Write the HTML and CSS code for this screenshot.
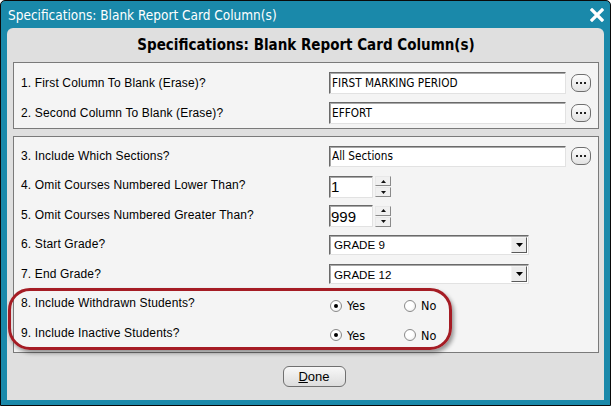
FILE: index.html
```html
<!DOCTYPE html>
<html>
<head>
<meta charset="utf-8">
<link rel="stylesheet" href="styles.css">
</head>
<body>
<div class="window">
  <div class="titlebar">
    <span class="title">Specifications: Blank Report Card Column(s)</span>
    <svg class="close" width="14" height="14" viewBox="0 0 14 14"><path d="M2 2 L12 12 M12 2 L2 12" stroke="#fff" stroke-width="3.2" stroke-linecap="square"/></svg>
  </div>
  <div class="panel">
    <div class="header">Specifications: Blank Report Card Column(s)</div>
    <div class="group g1">
      <div class="row r30">
        <span class="label">1. First Column To Blank (Erase)?</span>
        <div class="ctl"><div class="field wide">FIRST MARKING PERIOD</div><div class="ell"><svg width="10" height="2" viewBox="0 0 10 2"><rect x="0" y="0" width="2" height="2" fill="#222"/><rect x="4" y="0" width="2" height="2" fill="#222"/><rect x="8" y="0" width="2" height="2" fill="#222"/></svg></div></div>
      </div>
      <div class="row r30">
        <span class="label">2. Second Column To Blank (Erase)?</span>
        <div class="ctl"><div class="field wide">EFFORT</div><div class="ell"><svg width="10" height="2" viewBox="0 0 10 2"><rect x="0" y="0" width="2" height="2" fill="#222"/><rect x="4" y="0" width="2" height="2" fill="#222"/><rect x="8" y="0" width="2" height="2" fill="#222"/></svg></div></div>
      </div>
    </div>
    <div class="group g2">
      <div class="row r30">
        <span class="label">3. Include Which Sections?</span>
        <div class="ctl"><div class="field wide sec">All Sections</div><div class="ell"><svg width="10" height="2" viewBox="0 0 10 2"><rect x="0" y="0" width="2" height="2" fill="#222"/><rect x="4" y="0" width="2" height="2" fill="#222"/><rect x="8" y="0" width="2" height="2" fill="#222"/></svg></div></div>
      </div>
      <div class="row r29">
        <span class="label">4. Omit Courses Numbered Lower Than?</span>
        <div class="ctl spinctl"><div class="field num">1</div><div class="spin"><div class="sb"><svg width="5" height="3" viewBox="0 0 5 3"><path d="M2.5 0 L5 3 L0 3 Z" fill="#111"/></svg></div><div class="sb"><svg width="5" height="3" viewBox="0 0 5 3"><path d="M0 0 L5 0 L2.5 3 Z" fill="#111"/></svg></div></div></div>
      </div>
      <div class="row r30">
        <span class="label">5. Omit Courses Numbered Greater Than?</span>
        <div class="ctl spinctl"><div class="field num">999</div><div class="spin"><div class="sb"><svg width="5" height="3" viewBox="0 0 5 3"><path d="M2.5 0 L5 3 L0 3 Z" fill="#111"/></svg></div><div class="sb"><svg width="5" height="3" viewBox="0 0 5 3"><path d="M0 0 L5 0 L2.5 3 Z" fill="#111"/></svg></div></div></div>
      </div>
      <div class="row r29">
        <span class="label">6. Start Grade?</span>
        <div class="ctl"><div class="select"><span class="sv">GRADE 9</span><span class="arrow"><svg width="7" height="4" viewBox="0 0 7 4"><path d="M0 0 L7 0 L3.5 4 Z" fill="#000"/></svg></span></div></div>
      </div>
      <div class="row r30">
        <span class="label">7. End Grade?</span>
        <div class="ctl"><div class="select"><span class="sv">GRADE 12</span><span class="arrow"><svg width="7" height="4" viewBox="0 0 7 4"><path d="M0 0 L7 0 L3.5 4 Z" fill="#000"/></svg></span></div></div>
      </div>
      <div class="row r29">
        <span class="label">8. Include Withdrawn Students?</span>
        <div class="ctl radios"><span class="opt"><span class="radio on"></span>Yes</span><span class="opt"><span class="radio"></span>No</span></div>
      </div>
      <div class="row r30">
        <span class="label">9. Include Inactive Students?</span>
        <div class="ctl radios"><span class="opt"><span class="radio on"></span>Yes</span><span class="opt"><span class="radio"></span>No</span></div>
      </div>
    </div>
    <div class="footer">
      <div class="btn"><u>D</u>one</div>
    </div>
  </div>
  <div class="highlight"></div>
</div>
</body>
</html>
```

FILE: styles.css
```css
html, body {
  margin: 0;
  padding: 0;
  background: #fff;
}
.window {
  position: relative;
  width: 611px;
  height: 406px;
  box-sizing: border-box;
  border: 1px solid #0a0a0a;
  border-radius: 5px 5px 0 0;
  background: #1a89aa;
  display: flex;
  flex-direction: column;
  overflow: hidden;
}
.titlebar {
  height: 27px;
  flex: none;
  display: flex;
  align-items: center;
  justify-content: space-between;
  padding: 0 6px 0 7px;
  color: #fff;
  font-family: "DejaVu Sans Condensed", "DejaVu Sans", sans-serif;
  font-stretch: condensed;
  font-size: 13.5px;
}
.close {
  display: block;
  margin-top: 1px;
}
.panel {
  flex: 1;
  margin: 0 6px 5px 6px;
  padding: 0 5px 0 6px;
  background: #dfdfdf;
  border-radius: 6px 6px 0 0;
  display: flex;
  flex-direction: column;
}
.header {
  height: 34px;
  flex: none;
  display: flex;
  align-items: center;
  justify-content: center;
  font-family: "DejaVu Sans Condensed", "DejaVu Sans", sans-serif;
  font-stretch: condensed;
  font-weight: bold;
  font-size: 15px;
  color: #000;
}
.group {
  border: 1px solid #7a7a7a;
  background: #f4f4f4;
  padding-left: 7px;
}
.g1 {
  padding-top: 5px;
}
.g2 {
  margin-top: 7px;
  padding-top: 4px;
  padding-bottom: 4px;
}
.row {
  display: grid;
  grid-template-columns: 308px auto;
  align-items: center;
}
.r30 { height: 30px; }
.r29 { height: 29px; }
.label {
  font-family: "Liberation Sans", Arial, sans-serif;
  font-size: 12px;
  letter-spacing: 0.15px;
  color: #000;
  margin-top: -1px;
}
.ctl {
  display: flex;
  align-items: center;
}
.field {
  box-sizing: border-box;
  height: 22px;
  background: #fff;
  border: 1px solid;
  border-color: #6a6a6a #e2e2e2 #e2e2e2 #6a6a6a;
  box-shadow: inset 1px 1px 0 #a8a8a8;
  display: flex;
  align-items: center;
  padding-left: 2px;
  font-family: "DejaVu Sans Condensed", "DejaVu Sans", sans-serif;
  font-stretch: condensed;
  font-size: 11.7px;
  color: #000;
}
.wide {
  width: 237px;
}
.sec {
  height: 21px;
}
.ell {
  box-sizing: border-box;
  width: 20px;
  height: 18px;
  margin-left: 5px;
  border: 1px solid #6e6e6e;
  border-radius: 7px;
  background: linear-gradient(#fdfdfd, #e2e2e2);
  display: flex;
  align-items: center;
  justify-content: center;
}
.ell svg { display: block; }
.spinctl {
  margin-top: 2px;
}
.num {
  width: 44px;
  font-family: "Liberation Sans", Arial, sans-serif;
  font-size: 15px;
  padding-left: 1px;
}
.spin {
  margin-left: 2px;
  display: flex;
  flex-direction: column;
  gap: 1px;
}
.sb {
  box-sizing: border-box;
  width: 16px;
  height: 10px;
  border: 1px solid;
  border-color: #e8e8e8 #8a8a8a #8a8a8a #e8e8e8;
  background: #f0f0f0;
  display: flex;
  align-items: center;
  justify-content: center;
}
.sb svg { display: block; }
.select {
  box-sizing: border-box;
  width: 200px;
  height: 20px;
  background: #fff;
  border: 1px solid;
  border-color: #6a6a6a #e2e2e2 #e2e2e2 #6a6a6a;
  box-shadow: inset 1px 1px 0 #a8a8a8;
  display: flex;
  align-items: center;
  justify-content: space-between;
  padding: 0 1px 0 4px;
  font-family: "Liberation Sans", Arial, sans-serif;
  font-size: 11.6px;
  letter-spacing: 0;
  color: #000;
}
.arrow {
  box-sizing: border-box;
  width: 16px;
  height: 16px;
  border: 1px solid;
  border-color: #f4f4f4 #5a5a5a #5a5a5a #f4f4f4;
  background: #ececec;
  display: flex;
  align-items: center;
  justify-content: center;
}
.arrow svg { display: block; }
.radios {
  display: grid;
  grid-template-columns: 74px auto;
  align-items: center;
  padding-left: 1px;
  margin-top: 4px;
  font-family: "DejaVu Sans Condensed", "DejaVu Sans", sans-serif;
  font-stretch: condensed;
  font-size: 12.5px;
  color: #000;
}
.opt {
  display: flex;
  align-items: center;
  gap: 5px;
}
.radio {
  box-sizing: border-box;
  width: 12px;
  height: 12px;
  border-radius: 50%;
  border: 1px solid #8a8a8a;
  background: radial-gradient(circle at 40% 40%, #ffffff 40%, #e6e6e6 100%);
  display: flex;
  align-items: center;
  justify-content: center;
}
.radio.on::after {
  content: "";
  width: 4px;
  height: 4px;
  border-radius: 50%;
  background: #000;
}
.footer {
  display: flex;
  justify-content: center;
  padding: 13px 0 0 16px;
}
.btn {
  box-sizing: border-box;
  width: 63px;
  height: 21px;
  border: 1px solid #707070;
  border-radius: 6px;
  background: linear-gradient(#f8f8f8, #dcdcdc);
  display: flex;
  align-items: center;
  justify-content: center;
  font-family: "Liberation Sans", Arial, sans-serif;
  font-size: 13px;
  color: #000;
}
.highlight {
  position: absolute;
  left: 7px;
  top: 287px;
  width: 444px;
  height: 62px;
  box-sizing: border-box;
  border: 3px solid #a51c24;
  border-radius: 22px;
  box-shadow: 2px 3px 4px rgba(0, 0, 0, 0.4);
  pointer-events: none;
}
```
